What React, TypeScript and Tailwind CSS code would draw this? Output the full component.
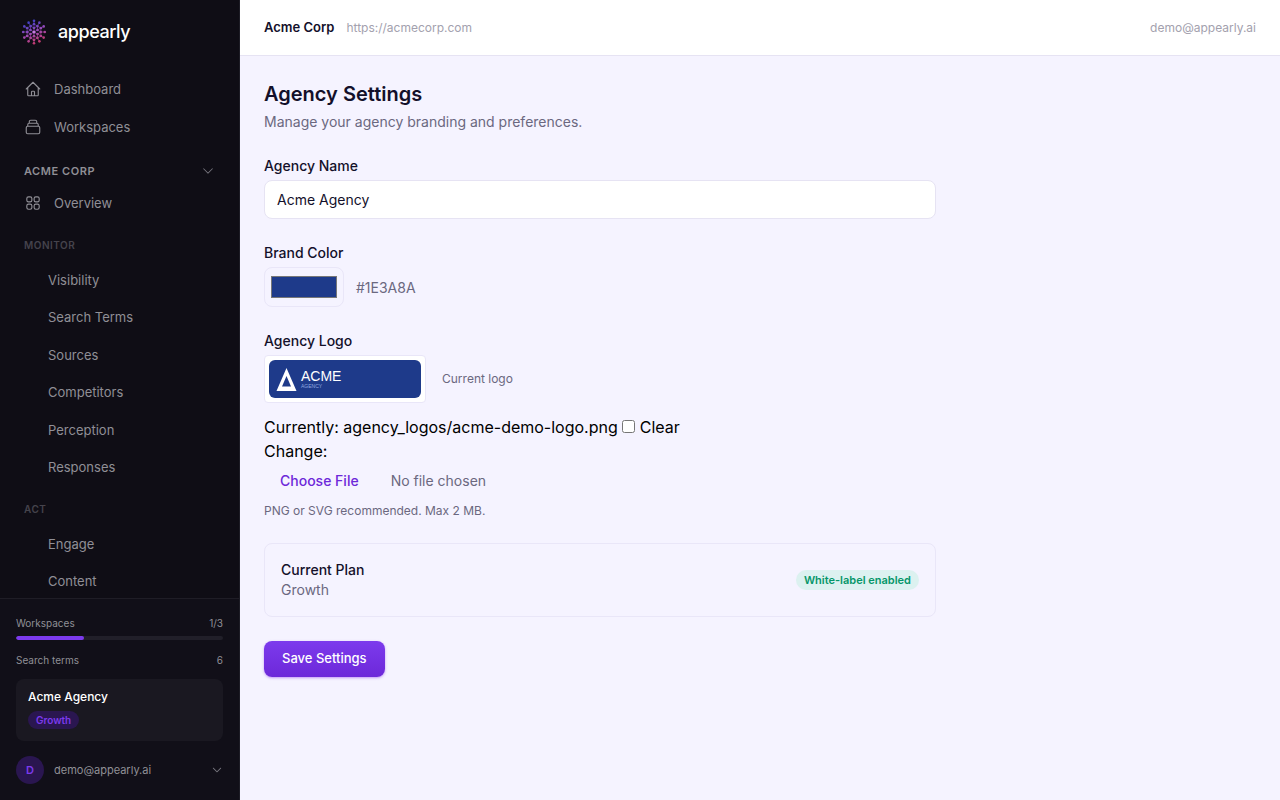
import React, { useState } from "react";
import { HiChevronDown, HiOutlineSquares2X2 } from "react-icons/hi2";

const monitorItems = ["Visibility", "Search Terms", "Sources", "Competitors", "Perception", "Responses"];
const actItems = ["Engage", "Content"];

const HOME_PATH =
  "M3 12l2-2m0 0l7-7 7 7M5 10v10a1 1 0 001 1h3m10-11l2 2m-2-2v10a1 1 0 01-1 1h-3m-6 0a1 1 0 001-1v-4a1 1 0 011-1h2a1 1 0 011 1v4a1 1 0 001 1m-6 0h6";
const STACK_PATH =
  "M19 11H5m14 0a2 2 0 012 2v6a2 2 0 01-2 2H5a2 2 0 01-2-2v-6a2 2 0 012-2m14 0V9a2 2 0 00-2-2M5 11V9a2 2 0 012-2m0 0V5a2 2 0 012-2h6a2 2 0 012 2v2M7 7h10";

const HEX = [0, 1, 2, 3, 4, 5].map((i) => ((i * 60 - 90) * Math.PI) / 180);
const ring = (r: number, turn: number) =>
  HEX.map((a) => [14 + r * Math.cos(a + turn), 14 + r * Math.sin(a + turn)] as const);
const inner = ring(4, 0);
const middle = ring(6.8, Math.PI / 6);
const outer = ring(8, 0);
const rim = [...ring(11.2, 0), ...ring(10.8, Math.PI / 6)];

function BrandMark() {
  const dots = [...inner, ...middle, ...outer, ...rim];
  return (
    <svg viewBox="0 0 28 28" className="size-7 shrink-0" aria-hidden="true">
      <defs>
        <linearGradient id="mark" gradientUnits="userSpaceOnUse" x1="9" y1="3" x2="18" y2="25">
          <stop offset="0" stopColor="#3b3fc4" />
          <stop offset="0.5" stopColor="#9b4bb8" />
          <stop offset="1" stopColor="#c43a6c" />
        </linearGradient>
      </defs>
      <g stroke="url(#mark)" strokeWidth="0.8" opacity="0.8" fill="none">
        {inner.map(([x, y], i) => {
          const next = (i + 1) % 6;
          return (
            <g key={i}>
              <path d={`M14 14L${x} ${y}L${rim[i][0]} ${rim[i][1]}`} />
              <path d={`M${x} ${y}L${middle[i][0]} ${middle[i][1]}L${inner[next][0]} ${inner[next][1]}`} />
              <path
                d={`M${outer[i][0]} ${outer[i][1]}L${middle[i][0]} ${middle[i][1]}L${outer[next][0]} ${outer[next][1]}`}
              />
              <path d={`M${middle[i][0]} ${middle[i][1]}L${rim[i + 6][0]} ${rim[i + 6][1]}`} />
            </g>
          );
        })}
      </g>
      <g fill="url(#mark)">
        {dots.map(([x, y], i) => (
          <circle key={i} cx={x} cy={y} r="1.3" />
        ))}
        <circle cx="14" cy="14" r="1.6" fill="#c77be0" />
      </g>
    </svg>
  );
}

function AgencyLogo() {
  return (
    <svg viewBox="0 0 152 38" className="h-[38px] w-[152px]" role="img" aria-label="Acme Agency">
      <rect width="152" height="38" rx="6" fill="#1e3a8a" />
      <path fillRule="evenodd" fill="#fff" d="M17.5 8L27.5 31H7.5zM17.5 16L13 26.500H22z" />
      <text x="32" y="21" fill="#fff" fontSize="14" fontFamily="Liberation Sans, sans-serif">
        ACME
      </text>
      <text x="32" y="28" fill="#93a9e0" fontSize="5" fontFamily="Liberation Sans, sans-serif">
        AGENCY
      </text>
    </svg>
  );
}

function OutlineIcon({ path }: { path: string }) {
  return (
    <svg
      viewBox="0 0 24 24"
      className="size-[18px]"
      fill="none"
      stroke="currentColor"
      strokeWidth="1.5"
      strokeLinecap="round"
      strokeLinejoin="round"
      aria-hidden="true"
    >
      <path d={path} />
    </svg>
  );
}

function NavLink({ icon, label }: { icon: React.ReactNode; label: string }) {
  return (
    <a href="#" className="flex h-[38px] items-center gap-3 px-3 text-[#908f96]">
      {icon}
      {label}
    </a>
  );
}

function NavHeading({ children }: { children: string }) {
  return (
    <h2 className="mt-[15px] mb-2 pl-3 text-[10px] leading-4 font-semibold tracking-wider text-[#45434c]">{children}</h2>
  );
}

function SubNav({ items, className }: { items: string[]; className: string }) {
  return (
    <ul className={`grid auto-rows-fr ${className}`}>
      {items.map((item) => (
        <li key={item} className="flex items-center">
          <a href="#" className="pl-9 text-[#908f96]">
            {item}
          </a>
        </li>
      ))}
    </ul>
  );
}

function Sidebar() {
  return (
    <aside className="flex w-60 shrink-0 flex-col border-r border-[#1d1c25] bg-[#0f0d15] text-[13px] leading-5">
      <a href="#" className="flex h-16 shrink-0 items-center gap-[10px] px-5 text-lg font-medium tracking-tight text-white">
        <BrandMark />
        appearly
      </a>
      <nav className="min-h-0 flex-1 overflow-hidden px-3 pt-[6px]">
        <NavLink icon={<OutlineIcon path={HOME_PATH} />} label="Dashboard" />
        <NavLink icon={<OutlineIcon path={STACK_PATH} />} label="Workspaces" />
        <button className="mt-3 flex h-[26px] w-full items-center justify-between px-3 text-[11px] font-semibold tracking-wider text-[#908f96]">
          ACME CORP
          <HiChevronDown className="size-[14px] text-[#77767e]" />
        </button>
        <NavLink icon={<HiOutlineSquares2X2 className="size-[18px]" />} label="Overview" />
        <NavHeading>MONITOR</NavHeading>
        <SubNav items={monitorItems} className="h-[225px]" />
        <NavHeading>ACT</NavHeading>
        <SubNav items={actItems} className="h-[75px]" />
      </nav>
      <div className="shrink-0 border-t border-[#1f1d26] bg-[#110f18] px-4 pt-4 pb-4 text-[10px] leading-4 text-[#908f96]">
        <div className="flex justify-between">
          <span>Workspaces</span>
          <span>1/3</span>
        </div>
        <div className="mt-[5px] h-1 overflow-hidden rounded-full bg-[#211f29]">
          <div className="h-full w-[33%] rounded-full bg-[#7c3aed]" />
        </div>
        <div className="mt-3 flex justify-between">
          <span>Search terms</span>
          <span>6</span>
        </div>
        <div className="mt-[11px] rounded-lg bg-[#1a1821] px-3 pt-2 pb-3">
          <p className="text-[12px] leading-5 font-medium text-white">Acme Agency</p>
          <span className="mt-1 block w-fit rounded-full bg-[#2a1650] px-2 py-px font-semibold text-[#7c3aed]">Growth</span>
        </div>
        <button className="mt-[15px] flex w-full items-center gap-[10px] text-[11px]">
          <span className="flex size-7 items-center justify-center rounded-full bg-[#2a1650] font-semibold text-[#7c3aed]">D</span>
          <span className="flex-1 text-left">demo@appearly.ai</span>
          <HiChevronDown className="size-3 text-[#77767e]" />
        </button>
      </div>
    </aside>
  );
}

export default function App() {
  const [name, setName] = useState("Acme Agency");
  const [color, setColor] = useState("#1e3a8a");

  return (
    <div className="flex h-screen bg-[#f5f3ff] font-['Inter',sans-serif] text-[#13102a]">
      <Sidebar />
      <div className="flex min-w-0 flex-1 flex-col">
        <header className="flex h-14 shrink-0 items-center gap-3 border-b border-[#e6e3f3] bg-white px-6 text-[12px]">
          <span className="text-[13px] font-semibold">Acme Corp</span>
          <a href="#" className="text-[#a3a1ae]">https://acmecorp.com</a>
          <span className="ml-auto text-[#a3a1ae]">demo@appearly.ai</span>
        </header>
        <main className="flex-1 overflow-auto px-6 pt-6">
          <form className="max-w-[672px]" onSubmit={(e) => e.preventDefault()}>
            <h1 className="text-[20px] leading-7 font-semibold">Agency Settings</h1>
            <p className="mt-1 text-[14px] leading-5 text-[#6b6880]">Manage your agency branding and preferences.</p>

            <label htmlFor="name" className="mt-6 block text-[14px] leading-5 font-medium">Agency Name</label>
            <input
              id="name"
              value={name}
              onChange={(e) => setName(e.target.value)}
              className="mt-1 block h-[39px] w-full rounded-lg border border-[#e6e3f3] bg-white px-3 text-[14px]"
            />

            <label htmlFor="color" className="mt-6 block text-[14px] leading-5 font-medium">Brand Color</label>
            <div className="mt-1 flex items-center gap-3">
              <input
                id="color"
                type="color"
                value={color}
                onChange={(e) => setColor(e.target.value)}
                className="h-10 w-20 rounded-lg border border-[#e9e6f8] p-1"
              />
              <span className="text-[14px] text-[#6b6880] uppercase">{color}</span>
            </div>

            <label htmlFor="logo" className="mt-6 block text-[14px] leading-5 font-medium">Agency Logo</label>
            <div className="mt-1 flex items-center gap-4">
              <div className="rounded-sm border border-[#e9e6f8] bg-white p-1">
                <AgencyLogo />
              </div>
              <span className="text-[12px] text-[#6b6880]">Current logo</span>
            </div>
            <div className="mt-3 text-[16px] leading-6 text-black">
              Currently: <a href="#">agency_logos/acme-demo-logo.png</a>{" "}
              <input id="clear" type="checkbox" /> <label htmlFor="clear">Clear</label>
              <br />
              Change:
              <input
                id="logo"
                type="file"
                className="block w-full text-[14px] text-[#6b6880] file:mr-4 file:px-4 file:py-[6px] file:font-medium file:text-[#6d28d9]"
              />
            </div>
            <p className="mt-1 text-[12px] leading-4 text-[#6b6880]">PNG or SVG recommended. Max 2 MB.</p>

            <section className="mt-6 flex items-center justify-between rounded-lg border border-[#e9e6f8] p-4">
              <div className="text-[14px] leading-5">
                <h2 className="font-medium">Current Plan</h2>
                <p className="text-[#6b6880]">Growth</p>
              </div>
              <span className="rounded-full bg-[#dcf1f0] px-2 py-[2px] text-[11px] leading-4 font-semibold text-[#059669]">
                White-label enabled
              </span>
            </section>

            <button className="mt-6 h-9 rounded-lg bg-linear-to-b from-[#7c3aed] to-[#6d28d9] px-[18px] text-[13px] font-medium text-white shadow-sm shadow-violet-700/30">
              Save Settings
            </button>
          </form>
        </main>
      </div>
    </div>
  );
}
